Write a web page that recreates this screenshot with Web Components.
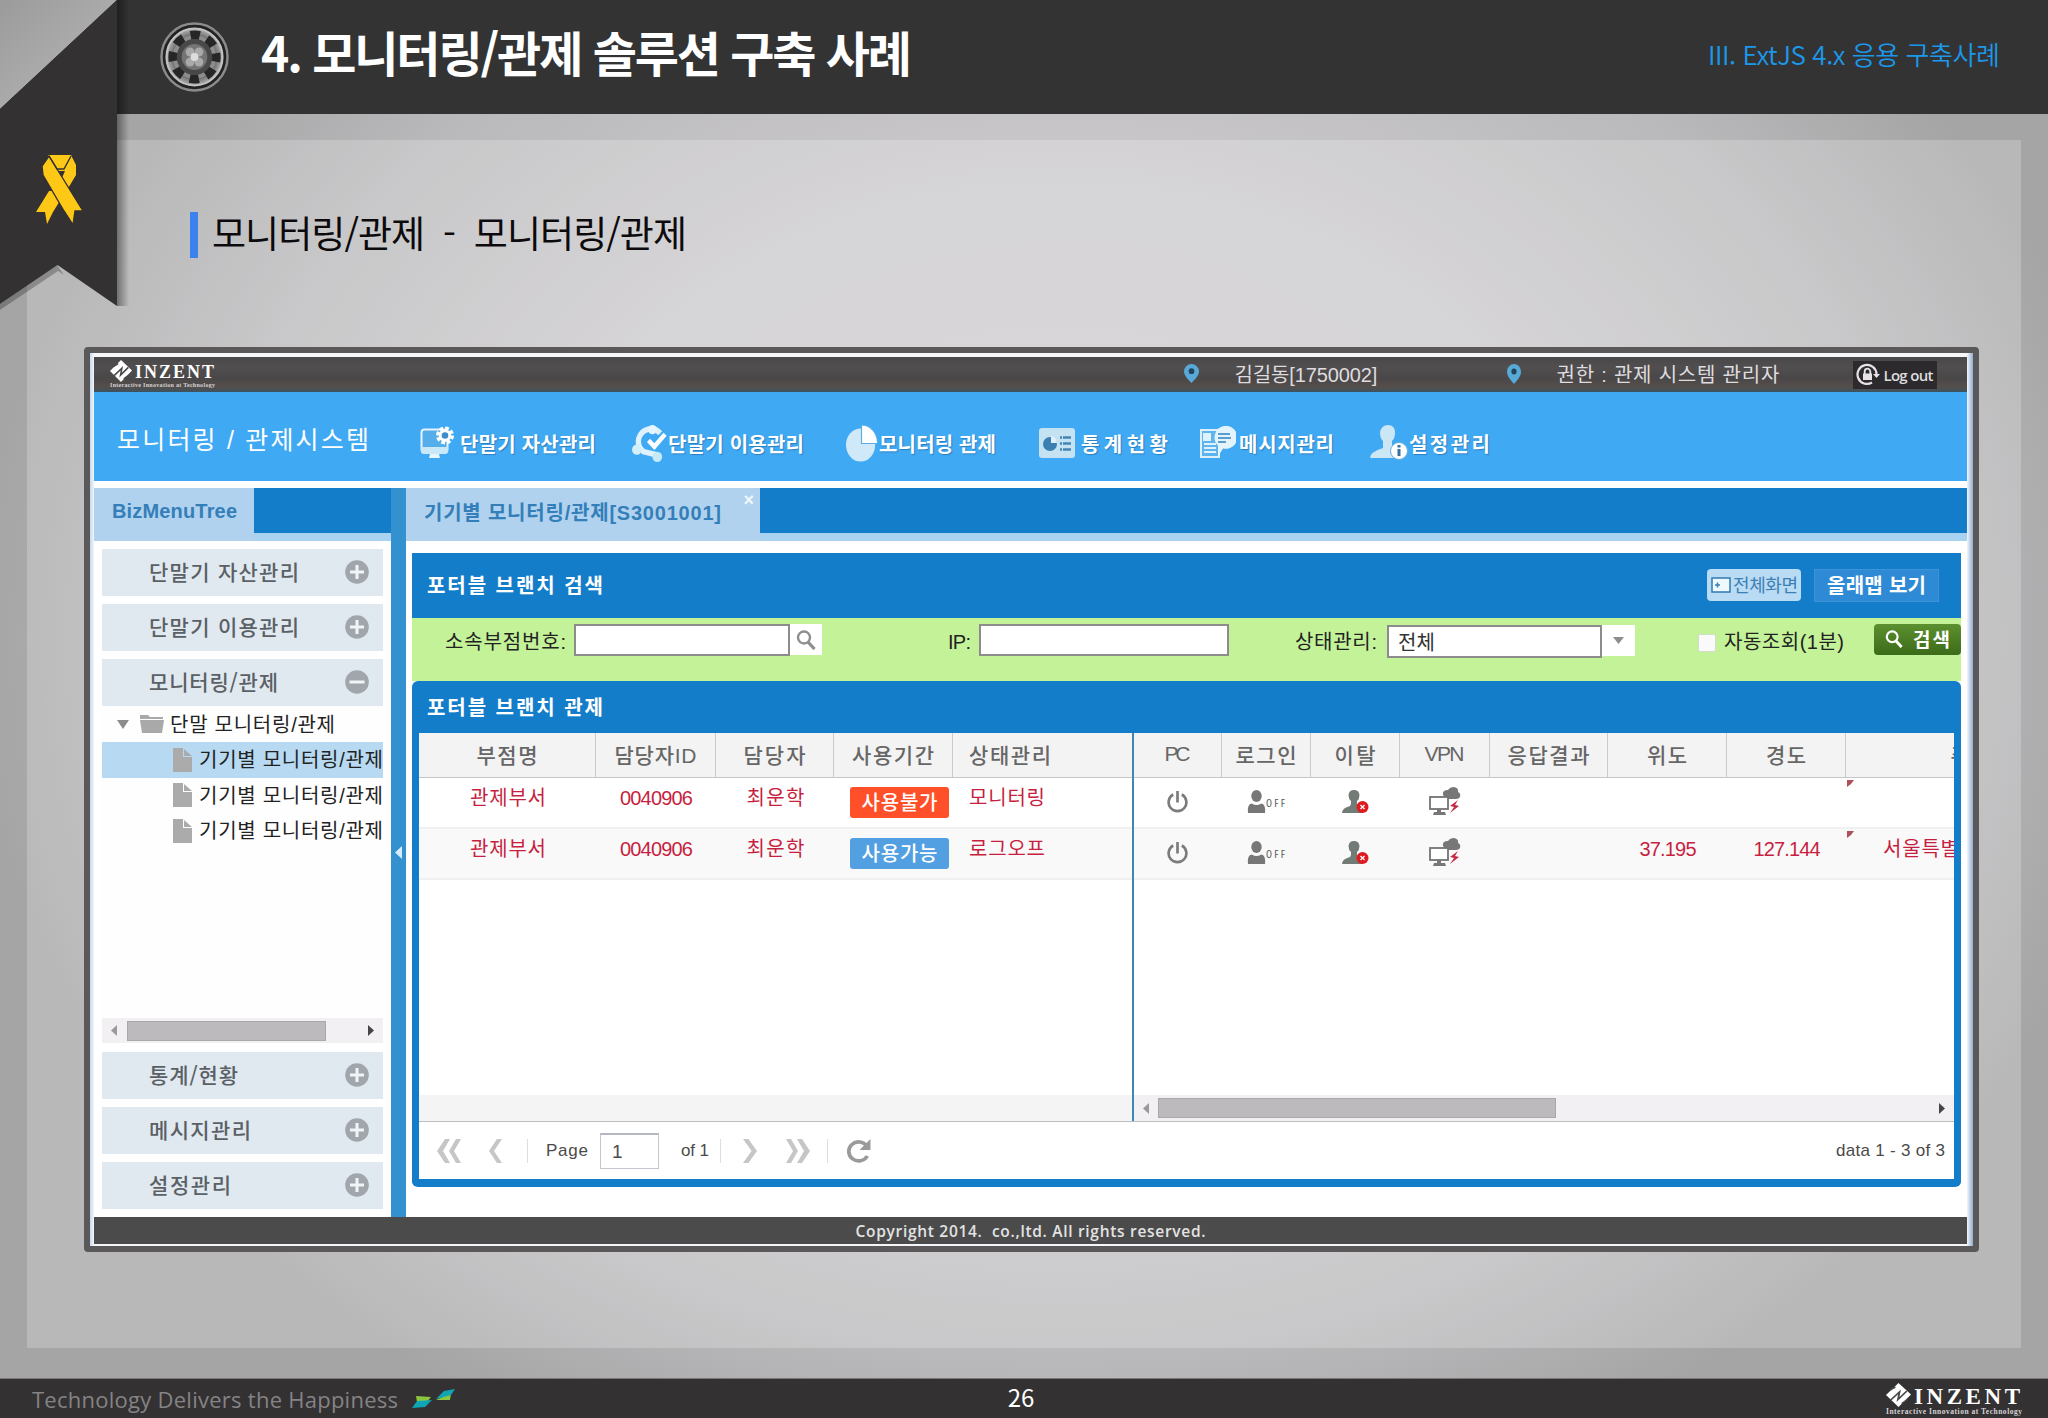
<!DOCTYPE html>
<html lang="ko">
<head>
<meta charset="UTF-8">
<title>모니터링/관제 솔루션 구축 사례</title>
<style>
  html, body {
    margin: 0;
    padding: 0;
  }

  body {
    width: 2048px;
    height: 1418px;
    overflow: hidden;
    font-family: "Liberation Sans", "Noto Sans CJK KR", sans-serif;
  }
</style>
</head>
<body>
<slide-page></slide-page>

<script>
const ICONS = {
  gear: `<svg viewBox="0 0 70 70">
    <defs><radialGradient id="g"><stop offset="0" stop-color="#d8d8d8"/><stop offset=".35" stop-color="#8f8f8f"/><stop offset=".75" stop-color="#6a6a6a"/><stop offset="1" stop-color="#b0b0b0"/></radialGradient></defs>
    <circle cx="35" cy="35" r="33.5" fill="#222" stroke="#8b8b8b" stroke-width="2.5"/>
    <circle cx="35" cy="35" r="28.500" fill="url(#g)" stroke="#c2c2c2" stroke-width="2"/>
    <circle cx="35" cy="35" r="22" fill="#8d8d8d"/>
    <circle cx="35" cy="35" r="22" fill="none" stroke="#262626" stroke-width="9" stroke-dasharray="9.500 7.780" stroke-dashoffset="4.750"/>
    <circle cx="35" cy="35" r="18" fill="#484848"/>
    <circle cx="35" cy="35" r="13" fill="#747474"/>
    <circle cx="30.500" cy="30" r="4.500" fill="#a9a9a9"/><circle cx="39.500" cy="30" r="4.500" fill="#a9a9a9"/>
    <circle cx="30.500" cy="40" r="4.500" fill="#a9a9a9"/><circle cx="39.500" cy="40" r="4.500" fill="#a9a9a9"/>
    <circle cx="35" cy="35" r="4" fill="#ddd"/></svg>`,
  yellow: `<svg viewBox="0 0 47 70" fill="#fec817">
    <path d="M12 0h23l5 10v10l-9 15-6-10 4-9H18l-4-6z"/>
    <path d="M30 37L17 58l-6 12-2-12-9 0 13-21z" transform="translate(0 -1)"/>
    <path d="M6 11l7-10 8 13 26 42-8 0-2 14-9-14L7 20z" stroke="#333132" stroke-width="1.4"/>
    <path d="M13 1l8 13h7L35 1" fill="none" stroke="#333132" stroke-width="1.4"/></svg>`,
  mark: `<svg viewBox="0 0 24 24"><path d="M12 0l12 11.500L12 24 0 12z" fill="#fff"/><path d="M4.500 17L13 9l-1.500 7.500L20 8" fill="none" stroke="#4a4849" stroke-width="1.700"/><path d="M4 7l5-3M15 20.500l5-3.500" stroke="#4a4849" stroke-width="1.500"/></svg>`,
  pin: `<svg viewBox="0 0 16 20"><path d="M8 0a8 8 0 0 1 8 8c0 4-4 8-8 12C4 16 0 12 0 8a8 8 0 0 1 8-8z" fill="#58a9d8"/><circle cx="8" cy="7.5" r="3" fill="#23455c"/></svg>`,
  lock: `<svg viewBox="0 0 24 24" fill="none" stroke="#e6e2e6" stroke-width="2.2"><path d="M16 19.5A9.5 9.5 0 1 1 20.5 11"/><path d="M17 11h7l-3.500 4z" fill="#e6e2e6" stroke="none"/><rect x="7" y="10.500" width="9" height="6.500" fill="#e6e2e6" stroke="none"/><path d="M8.700 11V8.500a2.800 2.800 0 0 1 5.600 0V11" stroke-width="1.800"/></svg>`,
  device: `<svg viewBox="0 0 34 34"><rect x="1.500" y="3.500" width="26" height="23" rx="3" fill="#55aeea" stroke="#e4f3fc" stroke-width="2"/><path d="M1 21h27v4q0 3-3 3H4q-3 0-3-3z" fill="#c9e9f8"/><path d="M10 28h9l1 4H9z" fill="#e8f6ff"/><circle cx="25" cy="9.500" r="7" fill="none" stroke="#fff" stroke-width="4" stroke-dasharray="3.500 2"/><circle cx="25" cy="9.500" r="4.800" fill="#3d8dcd" stroke="#fff" stroke-width="3"/></svg>`,
  cycle: `<svg viewBox="0 0 36 36" fill="none"><path d="M29 8A13 13 0 0 0 7 13q-2 8 5 13l13 3" stroke="#dff1fc" stroke-width="5.500"/><circle cx="21" cy="4.500" r="4.500" fill="#e6f5fe"/><circle cx="5" cy="24" r="5" fill="#d3effa"/><circle cx="26" cy="31" r="5" fill="#c7eaf8"/><path d="M17 15l6 6L34 9" stroke="#fff" stroke-width="4.500"/></svg>`,
  pie: `<svg viewBox="0 0 34 38"><ellipse cx="15.500" cy="20.500" rx="15.500" ry="17" fill="#cfe9f8"/><path d="M16.500 0a17 18.500 0 0 1 17 19h-17z" fill="#fff" stroke="#58aee8" stroke-width="1.200"/></svg>`,
  stats: `<svg viewBox="0 0 36 30"><rect width="36" height="30" rx="3" fill="#c5e2f2"/><circle cx="11" cy="16" r="7" fill="#3c7fb2"/><path d="M12 15V8a7 7 0 0 1 6 7z" fill="#dff1fb"/><path d="M21 9.500h11M21 15.500h11M21 21.500h11" stroke="#4386b4" stroke-width="2.400" stroke-dasharray="2 1 9"/></svg>`,
  message: `<svg viewBox="0 0 36 34"><path d="M1 4h18v27H1z" fill="#5eb4ec" stroke="#ddf0fa" stroke-width="2"/><path d="M4 8h6v6H4zM4 18h12M4 22h12M4 26h12" fill="#dff1fb" stroke="#dff1fb" stroke-width="2"/><path d="M24 0a11.500 11.500 0 1 1-1 22.500l-5 8 0-11A11.500 11.500 0 0 1 24 0z" fill="#e3f4fc"/><path d="M18 8h12M18 12h13M18 16h8" stroke="#5a9fcc" stroke-width="1.800"/></svg>`,
  setting: `<svg viewBox="0 0 38 36"><path d="M18 0q7 0 7 8 0 5-3 8v5l9 5v7H0q0-6 13-10v-7q-3-3-3-8 1-8 8-8z" fill="#cbe7f5"/><circle cx="29" cy="26" r="8.500" fill="#fff" stroke="#67afe0"/><path d="M29 24v7M29 20v2.500" stroke="#39729d" stroke-width="3"/></svg>`,
  plus: `<svg viewBox="0 0 24 24"><circle cx="12" cy="12" r="11.800" fill="#a0a6ac"/><path d="M12 5v14M5 12h14" stroke="#f1f5f8" stroke-width="3"/></svg>`,
  minus: `<svg viewBox="0 0 24 24"><circle cx="12" cy="12" r="11.800" fill="#a0a6ac"/><path d="M4.500 12h15" stroke="#f1f5f8" stroke-width="3"/></svg>`,
  folder: `<svg viewBox="0 0 24 18" fill="#a9a9a9"><path d="M0 0h8l2 2h13v2H0z"/><path d="M0 5h24l-2 13H2z"/></svg>`,
  doc: `<svg viewBox="0 0 19 24"><path d="M0 0h10v9h9v15H0z" fill="#ababab"/><path d="M11 1l8 7h-8z" fill="#ababab"/></svg>`,
  search: `<svg viewBox="0 0 20 20" fill="none" stroke="currentColor"><circle cx="8" cy="7.500" r="6" stroke-width="2.400"/><path d="M12 12l6.500 7" stroke-width="3.200"/></svg>`,
  screen: `<svg viewBox="0 0 20 16"><rect x="1" y="1" width="18" height="14" fill="#eef8ff" stroke="#3a7fb4" stroke-width="1.600"/><path d="M4 8h5M6.500 5.500v5" stroke="#3a7fb4" stroke-width="1.500"/></svg>`,
  power: `<svg viewBox="0 0 22 24" fill="none" stroke="#7c7c7c" stroke-width="2.800"><path d="M6.500 4.700a9.300 9.300 0 1 0 9 0M11 1v12"/></svg>`,
  user: `<svg viewBox="0 0 20 23" fill="#777"><ellipse cx="10" cy="6" rx="5.500" ry="6"/><path d="M1 23q-1-9 4-9.500 5 3 10 0 5 .5 4 9.500z"/></svg>`,
  leave: `<svg viewBox="0 0 27 24"><path d="M12 0q5 0 5.500 5 0 4-2.500 6v3l6 3v6H0q0-5 8-7l1-2v-3Q6.500 9 6.500 5 7 0 12 0z" fill="#737b77"/><circle cx="20.500" cy="17" r="6" fill="#e01b1f"/><path d="M18.500 15l4 4m0-4l-4 4" stroke="#fff" stroke-width="1.300"/></svg>`,
  vpn: `<svg viewBox="0 0 32 30"><path d="M14 8q-1-5 5-5 2-3 6-3 5 1 4 5 3 1 2 5-1 2-4 2H17z" fill="#777"/><rect x="1" y="10" width="18" height="12" fill="#fff" stroke="#747474" stroke-width="1.800"/><path d="M8 22h4v3h4l1 3H4l1-3h3z" fill="#777"/><path d="M29 13l-8 6 4 1-4 6 9-7-4-1z" fill="#c62b45"/></svg>`,
  first: `<svg viewBox="0 0 24 24" fill="#c6c6c6"><path d="M8 0h5L6 12l7 12H8L0 12z"/><path d="M19 0h5l-7 12 7 12h-5l-7-12z"/></svg>`,
  prev: `<svg viewBox="0 0 13 24" fill="#c6c6c6"><path d="M8 0h5L5 12l8 12H8L0 12z"/></svg>`,
  next: `<svg viewBox="0 0 13 24" fill="#c6c6c6"><path d="M5 0H0l8 12-8 12h5l8-12z"/></svg>`,
  last: `<svg viewBox="0 0 24 24" fill="#c6c6c6"><path d="M5 0H0l7 12-7 12h5l7-12z"/><path d="M16 0h-5l7 12-7 12h5l8-12z"/></svg>`,
  refresh: `<svg viewBox="0 0 24 24"><path d="M20 7A9.500 9.500 0 1 0 20.500 17" fill="none" stroke="#9a9a9a" stroke-width="3.600"/><path d="M23.500 0v11H13z" fill="#9a9a9a"/></svg>`,
  wings: `<svg viewBox="0 0 43 19"><path d="M4 7l15 1-4 5H5z" fill="#8cc63f"/><path d="M0 19l5-7 15-1-7 7z" fill="#10a5b5"/><path d="M24 11l15-7-1 7z" fill="#8cc63f"/><path d="M24 10l8-8 11-2-4 6z" fill="#10a5b5"/></svg>`,
  left: `<svg viewBox="0 0 7 12" fill="currentColor"><path d="M7 0v12L0 6z"/></svg>`,
  right: `<svg viewBox="0 0 7 12" fill="currentColor"><path d="M0 0v12l7-6z"/></svg>`,
  down: `<svg viewBox="0 0 12 8" fill="currentColor"><path d="M0 0h12L6 8z"/></svg>`
};

function define(name, css, html) {
  customElements.define(name, class extends HTMLElement {
    connectedCallback() {
      if (this.shadowRoot) return;
      const root = this.attachShadow({ mode: "open" });
      const body = typeof html === "function" ? html(this) : html;
      root.innerHTML = `<style>* { box-sizing: border-box; } ${css}</style>${body}`;
    }
  });
}

/* Slide */
define("slide-page", `
  :host {
    display: grid;
    grid-template-rows: 114px 1264px 40px;
    width: 2048px;
    height: 1418px;
    position: relative;
    background: radial-gradient(ellipse 1080px 900px at 1060px 640px, #cfcdd0 0%, #cbc9cc 50%, #b9b8ba 80%, #a6a5a6 100%);
  }
  main {
    margin: 26px 27px 30px;
    padding: 72px 0 0 57px;
    background: rgba(255, 255, 255, 0.22);
  }
  h2 {
    display: flex;
    align-items: center;
    height: 46px;
    margin: 0 0 89px 106px;
    padding: 0 0 5px 14px;
    border-left: 8px solid #3b82ee;
    font: 400 37px/41px "Noto Sans CJK KR", sans-serif;
    color: #0c0a0c;
  }
  corner-ribbon { position: absolute; left: 0; top: 0; }
`, `
  <slide-header></slide-header>
  <main>
    <h2><fit-text w="475">모니터링/관제  -  모니터링/관제</fit-text></h2>
    <app-window></app-window>
  </main>
  <slide-footer></slide-footer>
  <corner-ribbon></corner-ribbon>
`);

define("slide-header", `
  :host {
    display: flex;
    align-items: center;
    justify-content: space-between;
    padding: 0 48px 5px 160px;
    background: #333;
    font-family: "Noto Sans CJK KR", sans-serif;
  }
  .title { display: flex; align-items: center; gap: 32px; }
  h1 { margin: 0 0 7px; font-size: 48px; font-weight: 700; line-height: 60px; color: #fff; }
  .chapter { margin-bottom: 3px; font-size: 26px; font-weight: 350; color: #1b98ea; }
  svg-icon { margin-top: 4px; }
`, `
  <div class="title">
    <svg-icon name="gear" w="69" h="70"></svg-icon>
    <h1><fit-text w="651">4. 모니터링/관제 솔루션 구축 사례</fit-text></h1>
  </div>
  <div class="chapter"><fit-text w="292">III. ExtJS 4.x 응용 구축사례</fit-text></div>
`);

define("corner-ribbon", `
  :host { display: block; width: 130px; height: 320px; }
  svg { display: block; }
`, `
  <svg width="130" height="320" viewBox="0 0 130 320">
    <defs>
      <linearGradient id="fold" x1="0" y1="0" x2="1" y2="1"><stop offset="0" stop-color="#9b9b9b"/><stop offset="1" stop-color="#b9b9b9"/></linearGradient>
      <linearGradient id="side"><stop offset="0" stop-opacity=".4"/><stop offset="1" stop-opacity="0"/></linearGradient>
    </defs>
    <rect x="117" y="0" width="12" height="306" fill="url(#side)"/>
    <path d="M0 310L58 271L64 275L57 265L0 304z" fill="#000" opacity=".25"/>
    <path d="M0 0H117L0 109z" fill="url(#fold)"/>
    <path d="M117 0V306L57.500 265L0 304V109z" fill="#333132"/>
    <svg x="36" y="155" width="47" height="70" viewBox="0 0 47 70">${ICONS.yellow}</svg>
  </svg>
`);

define("slide-footer", `
  :host {
    display: grid;
    grid-template-columns: 1fr 40px 1fr;
    align-items: center;
    padding: 0 26px 0 32px;
    background: #333132;
    border-top: 1px solid #777;
    box-sizing: border-box;
  }
  .motto { display: flex; align-items: center; gap: 14px; font: 22px/30px "Open Sans", sans-serif; color: #858385; }
  .num { margin: -4px 6px 0 -6px; font: 24px/36px "Noto Sans CJK KR", sans-serif; color: #fff; text-align: center; }
  inzent-logo { justify-self: end; margin-top: 2px; }
`, `
  <div class="motto"><fit-text w="366">Technology Delivers the Happiness</fit-text><svg-icon name="wings" w="43" h="19"></svg-icon></div>
  <div class="num">26</div>
  <inzent-logo large></inzent-logo>
`);

define("inzent-logo", `
  :host { display: grid; width: 107px; grid-template-rows: 22px 7px; --name: 18px; --tag: 6px; }
  :host([large]) { width: 136px; grid-template-rows: 25px 9px; --name: 23px; --tag: 7.5px; }
  .row { display: flex; align-items: center; gap: 3px; }
  .name { font: 700 var(--name)/1 "Liberation Serif", serif; color: #fff; padding-top: 2px; }
  .tag { font: 700 var(--tag)/1 "Liberation Serif", serif; color: #d5d3d5; }
`, el => {
  const big = el.hasAttribute("large");
  return `
    <div class="row"><svg-icon name="mark" w="${big ? 25 : 22}" h="${big ? 24 : 22}"></svg-icon>
    <span class="name"><fit-text w="${big ? 106 : 79}">INZENT</fit-text></span></div>
    <div class="tag"><fit-text w="${big ? 136 : 105}">Interactive Innovation at Technology</fit-text></div>`;
});

/* Application window */
define("app-window", `
  :host {
    display: flex;
    flex-direction: column;
    width: 1895px;
    height: 905px;
    box-sizing: border-box;
    padding: 4px 6px 2px 4px;
    border: 6px solid #5b5859;
    border-radius: 4px;
    background: linear-gradient(90deg, #c5d8ec, #f4f6fa 4px, #f4f6fa 1877px, #8faed0);
  }
  .body { display: grid; grid-template-columns: 297px 15px 1561px; height: 729px; }
  main-nav { margin-bottom: 7px; box-shadow: 0 7px #fff; }
  .split { display: flex; align-items: center; justify-content: center; background: #3391d0; color: #d5ecfa; }
  footer {
    height: 27px;
    display: flex;
    align-items: center;
    justify-content: center;
    background: #4b4b4b;
    color: #e3e3e3;
    font: 600 15.500px "Open Sans", sans-serif;
  }
`, `
  <app-topbar></app-topbar>
  <main-nav></main-nav>
  <div class="body">
    <side-menu></side-menu>
    <div class="split"><svg-icon name="left" w="7" h="13"></svg-icon></div>
    <work-area></work-area>
  </div>
  <footer><fit-text w="350">Copyright 2014.  co.,ltd. All rights reserved.</fit-text></footer>
`);

define("app-topbar", `
  :host {
    display: flex;
    align-items: center;
    height: 35px;
    padding: 0 30px 0 16px;
    box-sizing: border-box;
    background: linear-gradient(#4a4849, #514e4f 30%, #494748 60%, #554e4b 85%, #3d5360);
    color: #dedcdf;
    font-size: 20px;
  }
  inzent-logo { margin: 0 968px 0 0; }
  svg-icon { margin-bottom: 2px; }
  .user { margin: 0 130px 2px 35px; }
  .auth { margin: 0 74px 2px 35px; }
  .logout { display: flex; align-items: center; gap: 3px; width: 84px; height: 28px; padding-left: 3px; background: #2c2a2c; font: 600 15px "Open Sans", sans-serif; }
  .logout svg-icon { margin: 0; }
`, `
  <inzent-logo></inzent-logo>
  <svg-icon name="pin" w="15" h="19"></svg-icon>
  <span class="user"><fit-text w="143">김길동[1750002]</fit-text></span>
  <svg-icon name="pin" w="14" h="20"></svg-icon>
  <span class="auth"><fit-text w="223">권한 : 관제 시스템 관리자</fit-text></span>
  <span class="logout"><svg-icon name="lock" w="24" h="24"></svg-icon><fit-text w="50">Log out</fit-text></span>
`);

define("main-nav", `
  :host {
    display: flex;
    align-items: center;
    height: 89px;
    padding: 13px 0 0 23px;
    box-sizing: border-box;
    background: #40a9f4;
    color: #fff;
  }
  .name { font-size: 25px; margin: 0 51px 11px 0; }
`, `
  <span class="name"><fit-text w="252">모니터링 / 관제시스템</fit-text></span>
  <nav-item icon="device" w="34" h="34" gap="6" text="136" after="36">단말기 자산관리</nav-item>
  <nav-item icon="cycle" w="35" h="37" gap="1" text="136" after="42">단말기 이용관리</nav-item>
  <nav-item icon="pie" w="32" h="37" gap="1" text="117" after="43">모니터링 관제</nav-item>
  <nav-item icon="stats" w="36" h="30" gap="6" text="87" after="32">통계현황</nav-item>
  <nav-item icon="message" w="36" h="34" gap="3" text="95" after="36">메시지관리</nav-item>
  <nav-item icon="setting" w="38" h="36" gap="1" text="81" after="0">설정관리</nav-item>
`);

define("nav-item", `
  :host { display: flex; align-items: center; font-size: 20px; font-weight: 700; text-shadow: 1px 1px 1px #2a7fbe; }
`, el => `
  <svg-icon name="${el.getAttribute("icon")}" w="${el.getAttribute("w")}" h="${el.getAttribute("h")}"></svg-icon>
  <fit-text w="${el.getAttribute("text")}" style="margin-left:${el.getAttribute("gap")}px;margin-right:${el.getAttribute("after")}px">${el.textContent}</fit-text>
`);

define("tab-strip", `
  :host { display: flex; height: 53px; }
  .tab { position: relative; display: flex; align-items: center; padding: 0 0 6px 18px; background: #b0d2ee; color: #347fb9; font-size: 20px; font-weight: 700; }
  .rest { flex: 1; background: #137dca; border-bottom: 8px solid #a9d1f0; }
  .close { position: absolute; right: 6px; top: 3px; font-size: 18px; line-height: 18px; color: #f1f8fd; }
`, el => `
  <div class="tab" style="width:${el.getAttribute("tab")}px">
    <fit-text w="${el.getAttribute("text")}">${el.textContent}</fit-text>
    ${el.hasAttribute("closable") ? '<span class="close">×</span>' : ""}
  </div>
  <div class="rest"></div>
`);

/* Left menu */
define("side-menu", `
  :host { display: block; background: #fff; }
  .group { display: grid; gap: 8px; padding: 8px 8px 0; }
  .group.bottom { padding-top: 9px; }
  .tree { height: 312px; margin: 0 8px; overflow: hidden; color: #222; font-size: 20px; background: #fefefe; }
  .node { display: flex; align-items: center; height: 35.5px; white-space: nowrap; }
  .node fit-text { margin-top: -2px; }
  .node.root { height: 36px; padding-left: 15px; gap: 11px; color: #222; }
  .node.root svg-icon { color: #8b8b8b; }
  .node.root fit-text { margin-left: -5px; }
  .leaf { padding-left: 71px; gap: 7px; }
  .leaf.on { background: #b7d9f1; }
  h-scroll { margin: 0 8px; height: 25px; }
`, `
  <tab-strip tab="160" text="125">BizMenuTree</tab-strip>
  <div class="group">
    <menu-head text="150">단말기 자산관리</menu-head>
    <menu-head text="150">단말기 이용관리</menu-head>
    <menu-head text="129" open>모니터링/관제</menu-head>
  </div>
  <div class="tree">
    <div class="node root"><svg-icon name="down" w="12" h="9"></svg-icon><svg-icon name="folder" w="24" h="18"></svg-icon><fit-text w="165">단말 모니터링/관제</fit-text></div>
    <div class="node leaf on"><svg-icon name="doc" w="19" h="24"></svg-icon><fit-text w="184">기기별 모니터링/관제</fit-text></div>
    <div class="node leaf"><svg-icon name="doc" w="19" h="24"></svg-icon><fit-text w="184">기기별 모니터링/관제</fit-text></div>
    <div class="node leaf"><svg-icon name="doc" w="19" h="24"></svg-icon><fit-text w="184">기기별 모니터링/관제</fit-text></div>
  </div>
  <h-scroll start="25" thumb="199"></h-scroll>
  <div class="group bottom">
    <menu-head text="89">통계/현황</menu-head>
    <menu-head text="102">메시지관리</menu-head>
    <menu-head text="82">설정관리</menu-head>
  </div>
`);

define("menu-head", `
  :host {
    display: flex;
    align-items: center;
    justify-content: space-between;
    height: 47px;
    box-sizing: border-box;
    padding: 0 14px 1px 47px;
    background: #e0e9f0;
    color: #5b6065;
    font: 500 21px/30px "Noto Sans CJK KR", sans-serif;
  }
  fit-text { margin-top: -2px; }
`, el => `
  <fit-text w="${el.getAttribute("text")}">${el.textContent}</fit-text>
  <svg-icon name="${el.hasAttribute("open") ? "minus" : "plus"}" w="24" h="24"></svg-icon>
`);

define("h-scroll", `
  :host { display: flex; align-items: center; justify-content: space-between; background: #f2f0f2; box-sizing: border-box; padding: 0 9px; }
  .l { color: #9a9a9a; display: flex; align-items: center; }
  .r { color: #454545; }
  .thumb { height: 20px; background: #bcbabc; border: 1px solid #aaa8aa; }
`, el => `
  <span class="l"><svg-icon name="left" w="6" h="11"></svg-icon><span class="thumb" style="width:${el.getAttribute("thumb")}px;margin-left:${el.getAttribute("start") - 15}px"></span></span>
  <svg-icon class="r" name="right" w="6" h="11"></svg-icon>
`);

/* Right side */
define("work-area", `
  :host { display: flex; flex-direction: column; background: #fff; }
  .panels { margin: 12px 6px 0; width: 1549px; }
`, `
  <tab-strip tab="354" text="297" closable>기기별 모니터링/관제[S3001001]</tab-strip>
  <div class="panels">
    <search-panel></search-panel>
    <monitor-panel></monitor-panel>
  </div>
`);

define("search-panel", `
  :host { display: block; }
  header { display: flex; align-items: center; height: 65px; padding: 0 22px 1px 15px; background: #137dca; color: #fff; font-size: 20px; font-weight: 600; }
  header b { margin-right: auto; font-weight: 700; }
  header fit-text { margin-top: -2px; }
  .full { display: flex; align-items: center; gap: 2px; width: 94px; height: 32px; padding-left: 4px; margin-right: 13px; border-radius: 4px; background: #b9dbf4; color: #3c7fb4; font-size: 18px; font-weight: 400; }
  .map { display: flex; align-items: center; justify-content: center; width: 125px; height: 33px; background: #2f8ad5; border: 1px solid #3d92d8; font-size: 20px; font-weight: 700; }
  form { display: flex; align-items: flex-start; height: 63px; padding: 6px 0 0 33px; background: #c4f299; color: #222; font-size: 20px; }
  form > fit-text { line-height: 36px; height: 32px; }
  .input { height: 32px; border: 2px solid #8c8c8c; background: #fff; }
  .trigger { display: flex; align-items: center; justify-content: center; width: 32px; height: 31px; background: #fff; color: #8e8e8e; }
  .select { display: flex; align-items: center; width: 215px; height: 33px; margin-top: 1px; padding-left: 9px; border: 2px solid #8c8c8c; background: #fff; color: #333; }
  .check { width: 18px; height: 18px; margin: 10px 8px 0 63px; background: #fafafa; border: 1px solid #d2dbd0; border-radius: 2px; }
  .go { display: flex; align-items: center; gap: 10px; width: 87px; height: 31px; margin-left: auto; padding: 0 0 2px 11px; border-radius: 4px; background: linear-gradient(#5c902f, #3c6b19); color: #fff; font-size: 19px; font-weight: 700; }
`, `
  <header>
    <b><fit-text w="176">포터블 브랜치 검색</fit-text></b>
    <span class="full"><svg-icon name="screen" w="20" h="16"></svg-icon><fit-text w="65">전체화면</fit-text></span>
    <span class="map"><fit-text w="99">올래맵 보기</fit-text></span>
  </header>
  <form>
    <fit-text w="121" style="margin-right:8px">소속부점번호:</fit-text>
    <span class="input" style="width:216px"></span>
    <span class="trigger"><svg-icon name="search" w="20" h="20"></svg-icon></span>
    <fit-text w="23" style="margin:0 8px 0 126px">IP:</fit-text>
    <span class="input" style="width:250px"></span>
    <fit-text w="82" style="margin:0 10px 0 66px">상태관리:</fit-text>
    <span class="select"><fit-text w="37">전체</fit-text></span>
    <span class="trigger" style="width:33px;margin-top:1px"><svg-icon name="down" w="11" h="7"></svg-icon></span>
    <span class="check"></span>
    <fit-text w="120">자동조회(1분)</fit-text>
    <span class="go"><svg-icon name="search" w="18" h="18"></svg-icon><fit-text w="37">검색</fit-text></span>
  </form>
`);

define("monitor-panel", `
  :host { display: block; height: 506px; box-sizing: border-box; border: solid #137dca; border-width: 0 7px 8px; border-radius: 6px; background: linear-gradient(#137dca 52px, #fff 52px); overflow: hidden; }
  header { display: flex; align-items: center; height: 52px; padding: 0 0 2px 8px; background: #137dca; color: #fff; font-size: 20px; font-weight: 700; }
`, `
  <header><fit-text w="176">포터블 브랜치 관제</fit-text></header>
  <data-grid></data-grid>
  <paging-bar></paging-bar>
`);

const lockedRow = (name, state, cls, status) => `
  <div class="row">
    <span><fit-text w="76">${name}</fit-text></span><span><fit-text w="73">0040906</fit-text></span>
    <span><fit-text w="58">최운학</fit-text></span>
    <span class="badge-cell"><i class="badge ${cls}"><fit-text w="76">${state}</fit-text></i></span>
    <span class="start"><fit-text w="76">${status}</fit-text></span>
  </div>`;

const openRow = (lat, lng, addr) => `
  <div class="row">
    <span class="ico"><svg-icon name="power" w="21" h="23"></svg-icon></span>
    <span class="ico"><svg-icon name="user" w="19" h="23"></svg-icon><em><fit-text w="19">OFF</fit-text></em></span>
    <span class="ico"><svg-icon name="leave" w="27" h="24"></svg-icon></span>
    <span class="ico"><svg-icon name="vpn" w="32" h="30"></svg-icon></span>
    <span></span>
    <span>${lat}</span><span>${lng}</span>
    <span class="addr"><i class="dirty"></i>${addr}</span>
  </div>`;

define("data-grid", `
  :host { display: grid; grid-template-columns: 713px 822px; height: 389px; background: #fff; border-bottom: 1px solid #bdbdbd; box-sizing: border-box; }
  .pane { display: flex; flex-direction: column; overflow: hidden; }
  .open { border-left: 2px solid #3f86b4; }
  .head, .row { display: grid; flex: none; }
  .locked .head, .locked .row { grid-template-columns: 177px 120px 118px 119px 179px; }
  .open .head, .open .row { grid-template-columns: 88px 89px 89px 90px 118px 119px 119px 252px; }
  .head { height: 45px; background: #f4f3f4; border-bottom: 1px solid #c6c6c6; color: #666; font-size: 21px; font-weight: 500; }
  .head span { display: flex; align-items: center; justify-content: center; height: 44px; padding-bottom: 2px; border-right: 1px solid #cacaca; }
  .locked .head span:last-child { border: 0; }
  .row { height: 51px; border-bottom: 2px solid #f1f0f1; color: #c71f3f; font-size: 20px; }
  .row:nth-child(3) { background: #faf9fa; }
  .row span { display: flex; justify-content: center; padding: 10px 0 0 1px; line-height: 20px; height: 49px; }
  .row .start, .head .start { justify-content: flex-start; padding-left: 16px; }
  .row .badge-cell { padding: 9px 4px 0 0; justify-content: flex-end; }
  .badge { width: 99px; height: 31px; display: flex; align-items: center; justify-content: center; border-radius: 3px; color: #fff; font-style: normal; font-weight: 500; }
  .no { background: #ff5029; }
  .yes { background: #529fe2; }
  .row .ico { align-items: center; padding: 0 1px 2px 0; }
  em { font: 11px "Open Sans", sans-serif; font-stretch: condensed; color: #555; padding-top: 2px; }
  .row .addr { position: relative; justify-content: flex-start; padding-left: 37px; }
  .dirty { position: absolute; left: 1px; top: 2px; border: 4px solid transparent; border-top-color: #b0505a; border-left-color: #b0505a; border-right-width: 3px; border-bottom-width: 3px; }
  .strip { margin-top: auto; height: 26px; background: #f5f4f5; }
  h-scroll { margin-top: auto; height: 26px; }
`, `
  <div class="pane locked">
    <div class="head">
      <span><fit-text w="61">부점명</fit-text></span><span><fit-text w="82">담당자ID</fit-text></span>
      <span><fit-text w="62">담당자</fit-text></span><span><fit-text w="82">사용기간</fit-text></span>
      <span class="start"><fit-text w="82">상태관리</fit-text></span>
    </div>
    ${lockedRow("관제부서", "사용불가", "no", "모니터링")}
    ${lockedRow("관제부서", "사용가능", "yes", "로그오프")}
    <div class="strip"></div>
  </div>
  <div class="pane open">
    <div class="head">
      <span><fit-text w="26">PC</fit-text></span><span><fit-text w="61">로그인</fit-text></span>
      <span><fit-text w="41">이탈</fit-text></span><span><fit-text w="40">VPN</fit-text></span>
      <span><fit-text w="82">응답결과</fit-text></span><span><fit-text w="40">위도</fit-text></span>
      <span><fit-text w="40">경도</fit-text></span><span><fit-text w="42">주소</fit-text></span>
    </div>
    ${openRow("", "", "")}
    ${openRow('<fit-text w="57">37.195</fit-text>', '<fit-text w="67">127.144</fit-text>', '<fit-text w="76">서울특별</fit-text>')}
    <h-scroll start="24" thumb="398"></h-scroll>
  </div>
`);

define("paging-bar", `
  :host { display: flex; align-items: center; height: 57px; padding: 0 9px 0 18px; box-sizing: border-box; background: #fff; color: #4a4a4a; font-size: 17px; }
  .sep { width: 1px; height: 24px; background: #dedede; }
  .page { display: flex; align-items: center; width: 59px; height: 36px; padding: 2px 0 0 11px; border: 1px solid #c3c5cf; border-top: 2px solid #b5b8c2; font-size: 19px; margin: 0 22px 0 12px; }
  .info { margin-left: auto; }
`, `
  <svg-icon name="first" w="24" h="24" style="margin-right:28px"></svg-icon>
  <svg-icon name="prev" w="13" h="24" style="margin-right:25px"></svg-icon>
  <span class="sep" style="margin-right:18px"></span>
  <fit-text w="42">Page</fit-text>
  <span class="page">1</span>
  <fit-text w="28">of 1</fit-text>
  <span class="sep" style="margin:0 22px 0 11px"></span>
  <svg-icon name="next" w="14" h="24" style="margin-right:29px"></svg-icon>
  <svg-icon name="last" w="24" h="24" style="margin-right:17px"></svg-icon>
  <span class="sep" style="margin-right:18px"></span>
  <svg-icon name="refresh" w="25" h="24"></svg-icon>
  <span class="info"><fit-text w="109">data 1 - 3 of 3</fit-text></span>
`);

define("svg-icon", `
  :host { display: block; flex: none; }
  svg { display: block; width: 100%; height: 100%; }
`, el => {
  el.style.width = el.getAttribute("w") + "px";
  el.style.height = el.getAttribute("h") + "px";
  return ICONS[el.getAttribute("name")].replace("<svg ", '<svg preserveAspectRatio="none" ');
});

// Text that is tracked to fill a given width; registered last so every parent is already styled
customElements.define("fit-text", class extends HTMLElement {
  connectedCallback() {
    if (this.shadowRoot) return;
    this.attachShadow({ mode: "open" }).innerHTML = `
      <style>
        :host { display: block; flex: none; }
        span { display: inline-block; white-space: pre; vertical-align: top; }
      </style>
      <span><slot></slot></span>`;
    const span = this.shadowRoot.querySelector("span");
    const width = Number(this.getAttribute("w"));
    const count = this.textContent.length;
    const natural = span.getBoundingClientRect().width;
    span.style.letterSpacing = (width - natural) / Math.max(count - 1, 1) + "px";
    this.style.width = width + "px";
  }
});
</script>
</body>
</html>
